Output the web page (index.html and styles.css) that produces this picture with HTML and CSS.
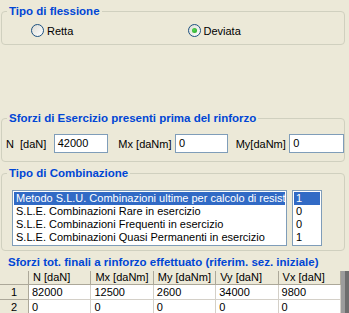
FILE: index.html
```html
<!DOCTYPE html>
<html lang="it">
<head>
    <meta charset="UTF-8">
    <title>Sforzi</title>
    <link rel="stylesheet" href="styles.css">
</head>
<body>

    <div class="panel">
        <fieldset class="group g-flex">
            <legend>Tipo di flessione</legend>
            <div class="radios">
                <label class="opt"><span class="radio"></span>Retta</label>
                <label class="opt"><span class="radio checked"></span>Deviata</label>
            </div>
        </fieldset>

        <fieldset class="group g-loads">
            <legend>Sforzi di Esercizio presenti prima del rinforzo</legend>
            <div class="fields">
                <span class="lbl lbl-n">N&nbsp; [daN]</span>
                <span class="box box-n">42000</span>
                <span class="lbl lbl-mx">Mx [daNm]</span>
                <span class="box box-mx">0</span>
                <span class="lbl lbl-my">My[daNm]</span>
                <span class="box box-my">0</span>
            </div>
        </fieldset>

        <fieldset class="group g-comb">
            <legend>Tipo di Combinazione</legend>
            <div class="lists">
                <ul class="list list-main">
                    <li class="sel"><span>Metodo S.L.U. Combinazioni ultime per calcolo di resistenza</span></li>
                    <li><span>S.L.E. Combinazioni Rare in esercizio</span></li>
                    <li><span>S.L.E. Combinazioni Frequenti in esercizio</span></li>
                    <li><span>S.L.E. Combinazioni Quasi Permanenti in esercizio</span></li>
                </ul>
                <ul class="list list-num">
                    <li class="sel">1</li>
                    <li>0</li>
                    <li>0</li>
                    <li>1</li>
                </ul>
            </div>
        </fieldset>

        <div class="title">Sforzi tot. finali a rinforzo effettuato (riferim. sez. iniziale)</div>
    </div>

    <div class="grid-wrap">
        <table class="grid">
            <tr>
                <th class="rowhead"></th>
                <th class="h-n">N [daN]</th>
                <th class="h-mx">Mx [daNm]</th>
                <th>My [daNm]</th>
                <th>Vy [daN]</th>
                <th>Vx [daN]</th>
            </tr>
            <tr>
                <th class="rowhead">1</th>
                <td>82000</td>
                <td>12500</td>
                <td>2600</td>
                <td>34000</td>
                <td>9800</td>
            </tr>
            <tr>
                <th class="rowhead">2</th>
                <td>0</td>
                <td>0</td>
                <td>0</td>
                <td>0</td>
                <td>0</td>
            </tr>
        </table>
    </div>

</body>
</html>
```

FILE: styles.css
```css
body {
    margin: 0;
    background: #ECE9D8;
    font-family: "Liberation Sans", Arial, sans-serif;
    font-size: 11px;
    color: #000;
    overflow: hidden;
}

.panel {
    padding: 0 4px 0 1px;
}

.group {
    margin: 0;
    padding: 0;
    border: 1px solid #D0D0BF;
    border-radius: 4px;
    min-width: 0;
}

.group legend {
    margin-left: 5px;
    padding: 0 2px;
    color: #0046D5;
    font-weight: bold;
    font-size: 11.5px;
    line-height: 14px;
}

/* Tipo di flessione */
.g-flex {
    margin-top: 4px;
}

.radios {
    display: flex;
    padding: 6px 0 7px 29px;
}

.opt {
    display: flex;
    align-items: center;
    width: 168px;
    height: 13px;
}

.radio {
    width: 11px;
    height: 11px;
    border: 1px solid #1C5180;
    border-radius: 50%;
    background: linear-gradient(135deg, #DCDCD4, #FFFFFF);
    margin-right: 3px;
    position: relative;
}

.radio.checked::after {
    content: "";
    position: absolute;
    left: 3px;
    top: 3px;
    width: 5px;
    height: 5px;
    border-radius: 50%;
    background: radial-gradient(circle at 40% 40%, #55D655, #21A121);
}

/* Sforzi di esercizio */
.g-loads {
    margin-top: 66px;
}

.fields {
    display: flex;
    align-items: center;
    padding: 9px 0 8px 4px;
}

.lbl {
    white-space: nowrap;
}

.lbl-n { width: 48px; }
.lbl-mx { width: 57px; margin-left: 10px; }
.lbl-my { width: 54px; margin-left: 8px; }

.box {
    height: 17px;
    line-height: 17px;
    border: 1px solid #7F9DB9;
    background: #fff;
    padding-left: 3px;
    box-sizing: content-box;
}

.box-n { width: 50px; }
.box-mx { width: 48px; }
.box-my { width: 50px; }

/* Tipo di combinazione */
.g-comb {
    margin-top: 4px;
}

.lists {
    display: flex;
    gap: 5px;
    padding: 10px 0 4px 10px;
}

.list {
    list-style: none;
    margin: 0;
    padding: 1px;
    border: 1px solid #7F9DB9;
    background: #fff;
    overflow: hidden;
}

.list li {
    height: 13px;
    line-height: 13px;
    padding-left: 2px;
    white-space: nowrap;
    overflow: hidden;
}

.list li span {
    display: block;
    overflow: hidden;
}

.list li.sel {
    background: #316AC5;
    color: #fff;
}

.list-main { width: 271px; }
.list-num { width: 26px; }

.title {
    margin-top: 4px;
    padding-left: 7px;
    color: #0046D5;
    font-weight: bold;
    font-size: 11.5px;
    line-height: 14px;
    white-space: nowrap;
}

/* griglia */
.grid-wrap {
    margin-top: 2px;
    background: #9C9C9C;
    border-right: 4px solid #6E6E6E;
}

.grid {
    border-collapse: collapse;
    table-layout: fixed;
    width: 341px;
    background: #fff;
}

.grid th,
.grid td {
    font-weight: normal;
    text-align: left;
    padding: 0 0 0 3px;
    white-space: nowrap;
    overflow: hidden;
    border-right: 1px solid #D4D0C8;
    border-bottom: 1px solid #D4D0C8;
}

.grid tr:first-child th {
    height: 13px;
    line-height: 13px;
    background: #ECE9D8;
    border-right: 1px solid #ACA899;
    border-bottom: 1px solid #ACA899;
    padding-left: 4px;
}

.grid td,
.grid .rowhead {
    height: 14px;
    line-height: 14px;
}

.grid .rowhead {
    width: 24px;
    padding: 0;
    text-align: center;
    background: #ECE9D8;
    border-right: 1px solid #ACA899;
    border-bottom: 1px solid #ACA899;
}

.grid th.h-n { padding-left: 8px; }
.grid th.h-mx { padding-left: 14px; }
```
